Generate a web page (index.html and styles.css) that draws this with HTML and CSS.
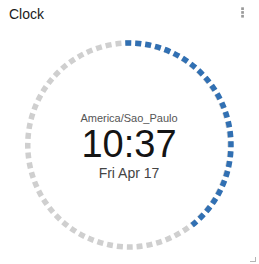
FILE: index.html
```html
<!DOCTYPE html>
<html>
<head>
<meta charset="utf-8">
<link rel="stylesheet" href="styles.css">
</head>
<body>
<div class="card">
  <div class="header">
    <span class="title">Clock</span>
    <svg class="kebab" width="4" height="12" viewBox="0 0 4 12">
      <rect x="1.2" y="0.3" width="2.7" height="2.7" fill="#9a9a9a"/>
      <rect x="1.2" y="4.1" width="2.7" height="2.7" fill="#9a9a9a"/>
      <rect x="1.2" y="7.9" width="2.7" height="2.7" fill="#9a9a9a"/>
    </svg>
  </div>
  <div class="face">
    <svg class="ring" width="216" height="216" viewBox="0 0 216 216">
      <path d="M104.30 6.07 A102 102 0 0 1 111.70 209.93 A102 102 0 0 1 104.30 6.07" pathLength="640" class="track"/>
      <path d="M104.30 6.07 A102 102 0 0 1 171.19 188.07" class="progress"/>
    </svg>
    <div class="readout">
      <div class="zone">America/Sao_Paulo</div>
      <div class="time">10:37</div>
      <div class="date">Fri Apr 17</div>
    </div>
  </div>
  <div class="grip"></div>
</div>
</body>
</html>
```

FILE: styles.css
```css
html, body {
  margin: 0;
  padding: 0;
  background: #ffffff;
}
.card {
  position: relative;
  width: 259px;
  height: 264px;
  background: #ffffff;
  font-family: "Liberation Sans", Arial, sans-serif;
  overflow: hidden;
}
.header {
  display: flex;
  justify-content: space-between;
  align-items: flex-start;
  height: 28px;
  padding: 6px 15px 0 9px;
  box-sizing: border-box;
}
.title {
  font-size: 14px;
  line-height: 16px;
  color: #1a1a1a;
}
.kebab {
  display: block;
  margin-top: 1px;
}
.face {
  display: grid;
  width: 216px;
  height: 216px;
  margin: 9px 0 0 21px;
}
.ring, .readout {
  grid-area: 1 / 1;
}
.ring {
  display: block;
}
.track, .progress {
  fill: none;
  stroke-width: 5.5;
  stroke-dasharray: 6 4;
  stroke-linecap: butt;
}
.track {
  stroke: #cfcfcf;
}
.progress {
  stroke: #3170b3;
}
.readout {
  display: flex;
  flex-direction: column;
  align-items: center;
  justify-content: center;
  padding-top: 3px;
}
.zone {
  font-size: 11px;
  line-height: 13px;
  color: #555555;
}
.time {
  font-size: 38px;
  line-height: 38px;
  color: #141414;
}
.date {
  font-size: 14px;
  line-height: 16px;
  color: #444444;
  margin-top: 2px;
}
.grip {
  position: absolute;
  right: 3px;
  bottom: 2px;
  width: 5px;
  height: 4px;
  border-right: 1.5px solid #b5b5b5;
  border-bottom: 1.5px solid #b5b5b5;
}
```
